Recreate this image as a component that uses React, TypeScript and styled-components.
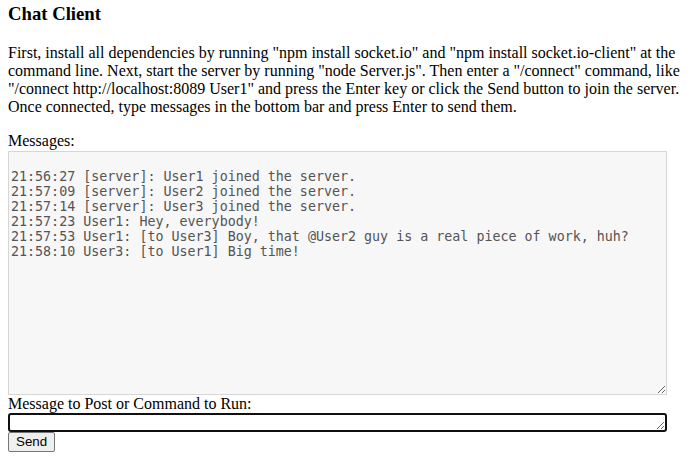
import React from "react";
import styled, { createGlobalStyle } from "styled-components";

const GlobalStyle = createGlobalStyle`
  body {
    margin: 0;
    padding: 3px 8px 8px;
    background: #ffffff;
    color: #000000;
    font-family: "Liberation Serif", "Times New Roman", serif;
    font-size: 16px;
  }
`;

const Page = styled.div`
  display: flex;
  flex-direction: column;
  align-items: flex-start;
`;

const Title = styled.h3`
  margin: 0 0 18.72px;
  font-size: 18.72px;
  font-weight: bold;
`;

const Intro = styled.p`
  margin: 0 0 16px;
  line-height: normal;
`;

const FieldLabel = styled.label<{ $gap?: number }>`
  display: block;
  margin-bottom: ${(p) => p.$gap ?? 0}px;
`;

const Log = styled.textarea`
  box-sizing: border-box;
  width: 659px;
  height: 244px;
  margin: 0;
  padding: 2px;
  border: 1px solid #d6d6d6;
  border-radius: 0;
  background: #f7f7f7;
  color: #545454;
  font-family: "DejaVu Sans Mono", monospace;
  font-size: 13.33px;
  line-height: normal;
  resize: both;
  outline: none;
`;

const Composer = styled.textarea`
  box-sizing: border-box;
  width: 659px;
  height: 19px;
  margin: 0;
  padding: 1px 2px;
  border: 2px solid #101010;
  border-radius: 3px;
  background: #ffffff;
  font-family: "DejaVu Sans Mono", monospace;
  font-size: 13.33px;
  line-height: 13px;
  resize: both;
  outline: none;
  overflow: hidden;
`;

const SendButton = styled.button`
  box-sizing: border-box;
  height: 20px;
  margin: 0;
  padding: 0 7px;
  border: 1px solid #767676;
  border-radius: 2px;
  background: #efefef;
  color: #000000;
  font-family: "Liberation Sans", Arial, sans-serif;
  font-size: 13.33px;
`;

const messages = [
  "",
  "21:56:27 [server]: User1 joined the server.",
  "21:57:09 [server]: User2 joined the server.",
  "21:57:14 [server]: User3 joined the server.",
  "21:57:23 User1: Hey, everybody!",
  "21:57:53 User1: [to User3] Boy, that @User2 guy is a real piece of work, huh?",
  "21:58:10 User3: [to User1] Big time!",
].join("\n");

const App = () => {
  return (
    <Page>
      <GlobalStyle />
      <Title>Chat Client</Title>
      <Intro>
        First, install all dependencies by running "npm install socket.io" and
        "npm install socket.io-client" at the command line. Next, start the
        server by running "node Server.js". Then enter a "/connect" command,
        like "/connect http://localhost:8089 User1" and press the Enter key or
        click the Send button to join the server. Once connected, type messages
        in the bottom bar and press Enter to send them.
      </Intro>
      <FieldLabel $gap={1}>Messages:</FieldLabel>
      <Log readOnly value={messages} />
      <FieldLabel>Message to Post or Command to Run:</FieldLabel>
      <Composer defaultValue="" />
      <SendButton>Send</SendButton>
    </Page>
  );
};

export default App;
